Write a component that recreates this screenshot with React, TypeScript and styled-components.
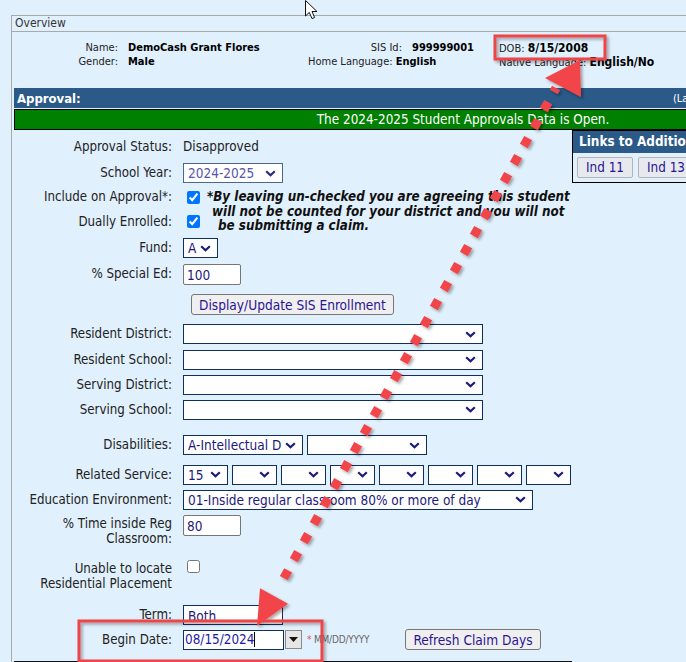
import styled, { createGlobalStyle } from 'styled-components'

const GlobalStyle = createGlobalStyle`
	html, body {
		margin: 0;
		padding: 0;
		background: #e1f0fd;
		overflow: hidden;
	}
	body {
		font-family: "DejaVu Sans Condensed", "DejaVu Sans", sans-serif;
		font-stretch: condensed;
		color: #222;
	}
`

const NAVY = '#0d2f62'
const INK = '#22187a'

function Chevron({ color = '#1a1a78' }: { color?: string }) {
	return (
		<svg width="11" height="7" viewBox="0 0 11 7">
			<path d="M1.2 1.2 L5.5 5.3 L9.8 1.2" fill="none" stroke={color} strokeWidth="2.2" />
		</svg>
	)
}

function Select({ w, value = '', muted }: { w: number; value?: string; muted?: boolean }) {
	return (
		<SelectBox $w={w} $muted={muted}>
			<SelectValue>{value}</SelectValue>
			<Chevron color={muted ? '#2a2a7a' : '#1a1a78'} />
		</SelectBox>
	)
}

const related = ['15', '', '', '', '', '', '', '']

export default function App(): JSX.Element {
	return (
		<Page>
			<GlobalStyle />

			<Panel>
				<PanelHeader>Overview</PanelHeader>

				<Info>
					<InfoLabel>Name:</InfoLabel>
					<InfoValue>DemoCash Grant Flores</InfoValue>
					<InfoLabel>SIS Id:</InfoLabel>
					<InfoValue>999999001</InfoValue>
					<InfoPair>DOB: <b>8/15/2008</b></InfoPair>

					<InfoLabel>Gender:</InfoLabel>
					<InfoValue>Male</InfoValue>
					<InfoSpan>Home Language: <b>English</b></InfoSpan>
					<InfoPair>Native Language: <b>English/No</b></InfoPair>
				</Info>

				<Body>
					<ApprovalBar>
						<span>Approval:</span>
						<BarNote>(Last Updated)</BarNote>
					</ApprovalBar>
					<OpenBanner>The 2024-2025 Student Approvals Data is Open.</OpenBanner>

					<FormArea>
						<Main>
							<Row $h={25}>
								<Label>Approval Status:</Label>
								<Plain>Disapproved</Plain>
							</Row>
							<Row $h={28}>
								<Label>School Year:</Label>
								<Select w={100} value="2024-2025" muted />
							</Row>

							<Checks>
								<CheckLabel $row={1}>Include on Approval*:</CheckLabel>
								<CheckCell $row={1}><Check type="checkbox" defaultChecked /></CheckCell>
								<Note>
									<NoteLine $indent={0}>*By leaving un-checked you are agreeing this student</NoteLine>
									<NoteLine $indent={5}>will not be counted for your district and you will not</NoteLine>
									<NoteLine $indent={11}>be submitting a claim.</NoteLine>
								</Note>
								<CheckLabel $row={2}>Dually Enrolled:</CheckLabel>
								<CheckCell $row={2}><Check type="checkbox" defaultChecked /></CheckCell>
							</Checks>

							<Row $h={24}>
								<Label>Fund:</Label>
								<Select w={35} value="A" />
							</Row>
							<Row $h={28}>
								<Label>% Special Ed:</Label>
								<TextBox $w={58}>100</TextBox>
							</Row>
							<Row $h={33}>
								<Label />
								<Button $indent={8}>Display/Update SIS Enrollment</Button>
							</Row>

							<Row $h={26}>
								<Label>Resident District:</Label>
								<Select w={300} />
							</Row>
							<Row $h={25}>
								<Label>Resident School:</Label>
								<Select w={300} />
							</Row>
							<Row $h={25}>
								<Label>Serving District:</Label>
								<Select w={300} />
							</Row>
							<Row $h={25}>
								<Label>Serving School:</Label>
								<Select w={300} />
							</Row>

							<Row $h={30} $mt={8}>
								<Label>Disabilities:</Label>
								<Controls>
									<Select w={120} value="A-Intellectual D" />
									<Select w={120} />
								</Controls>
							</Row>
							<Row $h={29}>
								<Label>Related Service:</Label>
								<Controls>
									{related.map((v, i) => <Select key={i} w={45} value={v} />)}
								</Controls>
							</Row>
							<Row $h={21}>
								<Label>Education Environment:</Label>
								<Select w={350} value="01-Inside regular classroom 80% or more of day" />
							</Row>

							<Row $h={34} $top={5}>
								<TallLabel>% Time inside Reg<br />Classroom:</TallLabel>
								<TextBox $w={58}>80</TextBox>
							</Row>
							<Row $h={45} $top={16}>
								<TallLabel>Unable to locate<br />Residential Placement</TallLabel>
								<Check type="checkbox" />
							</Row>

							<Row $h={25} $mt={13}>
								<Label>Term:</Label>
								<PlainBox $w={100}>Both</PlainBox>
							</Row>
							<Row $h={25}>
								<Label>Begin Date:</Label>
								<DateField>
									<DateText>08/15/2024<Caret /></DateText>
								</DateField>
								<DateButton>
									<svg width="9" height="5" viewBox="0 0 9 5"><path d="M0 0 H9 L4.5 5 Z" fill="#111" /></svg>
								</DateButton>
								<Hint><Star>*</Star> MM/DD/YYYY</Hint>
								<Button $indent={36}>Refresh Claim Days</Button>
							</Row>
							<BottomRule />
						</Main>

						<Side>
							<SideHeader>Links to Additional Information</SideHeader>
							<SideButtons>
								<SmallButton>Ind 11</SmallButton>
								<SmallButton>Ind 13</SmallButton>
							</SideButtons>
						</Side>
					</FormArea>
				</Body>
			</Panel>

			<Overlay width="686" height="662" viewBox="0 0 686 662">
				<defs>
					<filter id="shade" x="-20%" y="-20%" width="140%" height="140%">
						<feDropShadow dx="2" dy="2" stdDeviation="1.5" floodColor="#000" floodOpacity="0.35" />
					</filter>
				</defs>
				<g filter="url(#shade)">
					<rect x="495" y="36" width="110" height="23" fill="none" stroke="#ee4448" strokeWidth="3" />
					<rect x="79" y="621" width="243" height="40" fill="none" stroke="#ee4448" strokeWidth="3" />
					<line x1="556" y1="88" x2="280" y2="585" stroke="#f2454a" strokeWidth="9" strokeDasharray="9 11.6" strokeDashoffset="4.5" />
					<polygon points="580,60 581,97 545,78" fill="#f2454a" />
					<polygon points="257,626 288,603.8 260,588.2" fill="#f2454a" />
				</g>
				<path d="M305.5 0.5 L305.5 16 L309.3 12.4 L312 18.6 L314.6 17.5 L312 11.5 L317 11.5 Z" fill="#fff" stroke="#111" strokeWidth="1" />
			</Overlay>
		</Page>
	)
}

const Page = styled.div`
	position: relative;
	width: 686px;
	height: 662px;
	overflow: hidden;
	padding: 15px 0 0 11px;
	box-sizing: border-box;
`
const Panel = styled.div`
	width: 900px;
	height: 700px;
	border-left: 1px solid #a9a9a9;
	border-top: 1px solid #a9a9a9;
`
const PanelHeader = styled.div`
	height: 15px;
	line-height: 15px;
	padding-left: 3px;
	font-size: 12px;
	color: #333;
	border-bottom: 1px solid #a9a9a9;
`
const Info = styled.div`
	height: 56px;
	box-sizing: border-box;
	padding-top: 9px;
	display: grid;
	grid-template-columns: 106px 190px 94px 97px auto;
	grid-auto-rows: 14px;
	font-size: 11px;
	line-height: 14px;
	color: #222;
`
const InfoLabel = styled.div`
	text-align: right;
	white-space: nowrap;
`
const InfoValue = styled.div`
	padding-left: 10px;
	font-weight: bold;
	color: #000;
	white-space: nowrap;
`
const InfoPair = styled.div`
	white-space: nowrap;
	b { font-size: 12px; color: #000; }
`
const InfoSpan = styled.div`
	grid-column: span 2;
	white-space: nowrap;
	b { color: #000; }
`
const Body = styled.div`
	padding-left: 2px;
`
const ApprovalBar = styled.div`
	height: 20px;
	display: grid;
	grid-template-columns: 656px auto;
	align-items: center;
	padding-left: 3px;
	background: #2b5a88;
	color: #fff;
	font-weight: bold;
	font-size: 13px;
`
const BarNote = styled.span`
	font-size: 11px;
	font-weight: normal;
`
const OpenBanner = styled.div`
	margin-top: 1px;
	height: 19px;
	line-height: 19px;
	border: 1px solid #000;
	background: #008000;
	color: #fff;
	font-size: 13.4px;
	text-align: center;
`
const FormArea = styled.div`
	display: flex;
	align-items: flex-start;
`
const Main = styled.div`
	width: 558px;
	flex: none;
	padding-top: 4px;
`
const Row = styled.div<{ $h: number; $mt?: number; $top?: number }>`
	height: ${p => p.$h}px;
	margin-top: ${p => p.$mt ?? 0}px;
	padding-top: ${p => p.$top ?? 0}px;
	box-sizing: border-box;
	display: flex;
	align-items: ${p => (p.$top ? 'flex-start' : 'center')};
	white-space: nowrap;
`
const Label = styled.div`
	width: 158px;
	flex: none;
	margin-right: 11px;
	text-align: right;
	font-size: 13.2px;
	line-height: 14px;
	color: #222;
`
const TallLabel = styled(Label)`
	line-height: 15px;
	margin-top: 1px;
`
const Plain = styled.span`
	font-size: 13.4px;
	color: #222;
`
const SelectBox = styled.div<{ $w: number; $muted?: boolean }>`
	width: ${p => p.$w}px;
	height: 20px;
	flex: none;
	box-sizing: border-box;
	border: ${p => (p.$muted ? '1px solid #4a6791' : `1.5px solid ${NAVY}`)};
	background: #fff;
	display: flex;
	align-items: center;
	gap: 3px;
	padding: 0 6px 0 4px;
	font-size: 13.5px;
	color: ${p => (p.$muted ? '#5555ad' : INK)};
`
const SelectValue = styled.span`
	flex: 1;
	overflow: hidden;
	white-space: nowrap;
`
const Controls = styled.div`
	display: flex;
	gap: 4px;
`
const TextBox = styled.div<{ $w: number }>`
	width: ${p => p.$w}px;
	height: 21px;
	box-sizing: border-box;
	border: 1px solid #767676;
	border-radius: 2px;
	background: #fff;
	padding: 2px 3px;
	font-size: 13.5px;
	color: ${INK};
`
const PlainBox = styled.div<{ $w: number }>`
	width: ${p => p.$w}px;
	height: 20px;
	box-sizing: border-box;
	border: 1px solid ${NAVY};
	background: #fff;
	padding: 2px 4px;
	font-size: 13.5px;
	color: ${INK};
`
const Button = styled.div<{ $indent: number }>`
	margin-left: ${p => p.$indent}px;
	height: 21px;
	box-sizing: border-box;
	padding: 0 7px;
	display: flex;
	align-items: center;
	background: #efefef;
	border: 1px solid #767676;
	border-radius: 3px;
	font-size: 13.6px;
	color: #2a1496;
`
const Checks = styled.div`
	display: grid;
	grid-template-columns: 169px 24px auto;
	grid-template-rows: 20px 29px;
`
const CheckLabel = styled(Label)<{ $row: number }>`
	grid-row: ${p => p.$row};
	grid-column: 1;
	align-self: center;
	white-space: nowrap;
`
const CheckCell = styled.div<{ $row: number }>`
	grid-row: ${p => p.$row};
	grid-column: 2;
	align-self: center;
	display: flex;
`
const Check = styled.input`
	width: 13px;
	height: 13px;
	margin: 0 0 0 4px;
	accent-color: #0075ff;
`
const Note = styled.div`
	grid-row: 1 / span 2;
	grid-column: 3;
	padding-top: 3px;
	font-size: 13.3px;
	font-weight: bold;
	font-style: italic;
	line-height: 14.5px;
	color: #111;
	white-space: nowrap;
`
const NoteLine = styled.div<{ $indent: number }>`
	padding-left: ${p => p.$indent}px;
`
const DateField = styled.div`
	width: 101px;
	height: 20px;
	box-sizing: border-box;
	border: 1.5px solid ${NAVY};
	background: #fff;
	padding: 1px 1px;
	font-size: 13.4px;
	color: #1a1aa8;
`
const DateText = styled.span`
	display: inline-flex;
	align-items: center;
`
const Caret = styled.span`
	width: 1px;
	height: 15px;
	background: #000;
`
const DateButton = styled.div`
	width: 17px;
	height: 19px;
	box-sizing: border-box;
	margin-left: 1px;
	border: 1px solid #8a8a8a;
	background: #e6e6e6;
	display: flex;
	align-items: center;
	justify-content: center;
`
const Hint = styled.span`
	margin-left: 5px;
	font-size: 10px;
	color: #666;
	letter-spacing: -0.2px;
`
const Star = styled.span`
	color: #e0505a;
	font-size: 10px;
`
const BottomRule = styled.div`
	margin-top: 9px;
	height: 2px;
	background: #111;
`
const Side = styled.div`
	width: 140px;
	flex: none;
	border: 1px solid #000;
	background: #e1f0fd;
`
const SideHeader = styled.div`
	height: 22px;
	line-height: 22px;
	padding-left: 6px;
	background: #2b5a88;
	color: #fff;
	font-weight: bold;
	font-size: 13.4px;
	white-space: nowrap;
	overflow: hidden;
`
const SideButtons = styled.div`
	display: flex;
	gap: 5px;
	padding: 4px;
`
const SmallButton = styled.div`
	height: 21px;
	box-sizing: border-box;
	padding: 0 8px;
	display: flex;
	align-items: center;
	background: #e6e9ed;
	border: 1px solid #b4b4b4;
	border-radius: 2px;
	font-size: 13.4px;
	color: #2a1496;
	white-space: nowrap;
`
const Overlay = styled.svg`
	position: absolute;
	left: 0;
	top: 0;
	pointer-events: none;
`
